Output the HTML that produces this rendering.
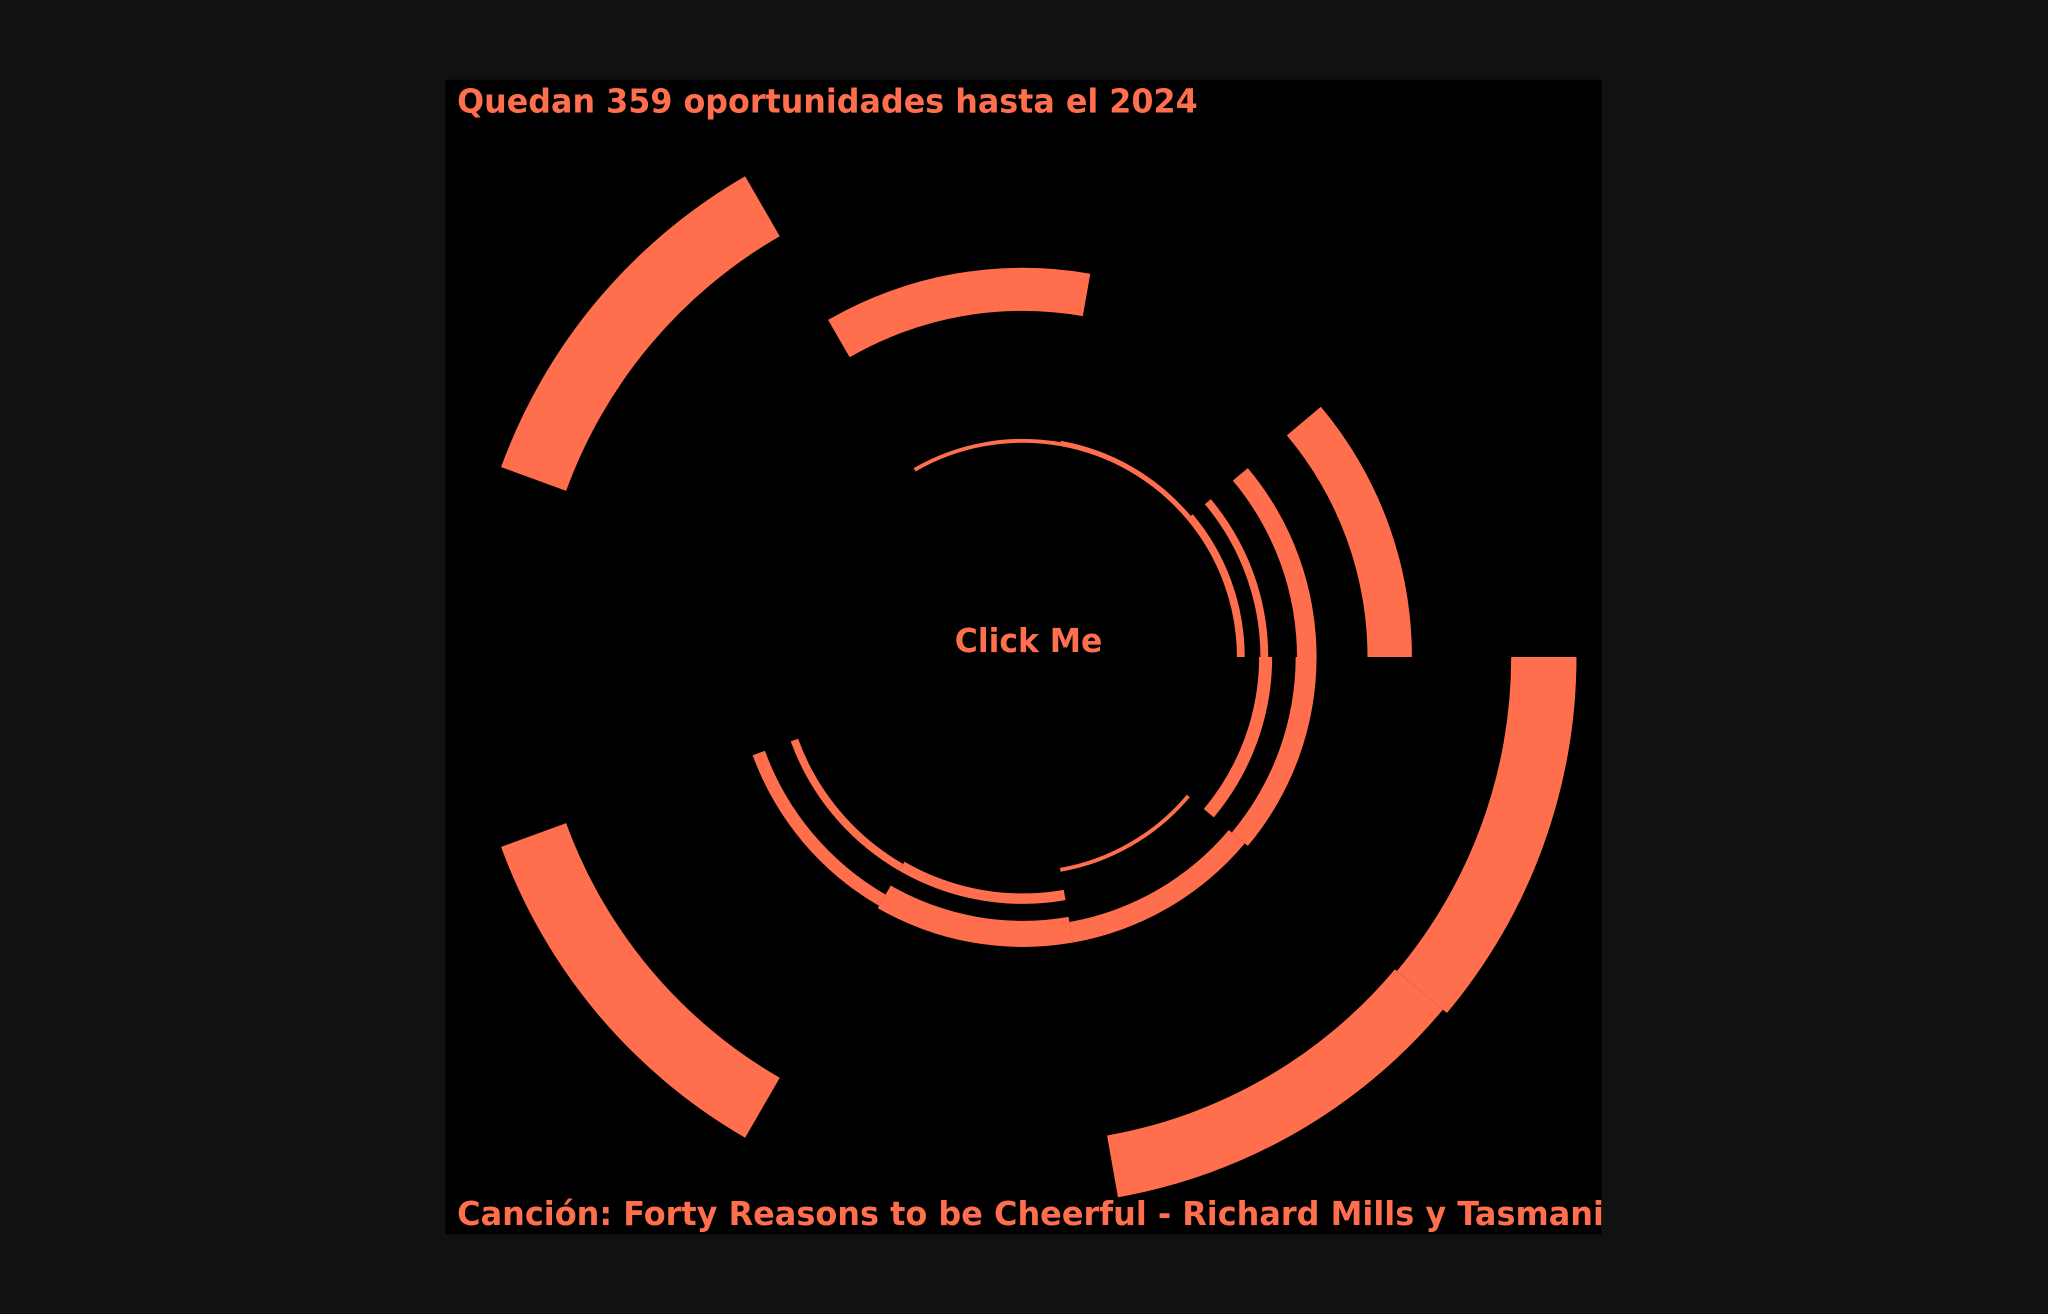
<!DOCTYPE html>
<html><head><meta charset="utf-8"><style>
html,body{margin:0;padding:0;background:#111;width:2048px;height:1314px;overflow:hidden}
svg{display:block}
text{font-family:"DejaVu Sans","Liberation Sans",sans-serif;font-weight:bold;fill:#ff6f4d}
</style></head><body>
<svg id="s" width="2048" height="1314" viewBox="0 0 1568 1006" xmlns="http://www.w3.org/2000/svg">
<defs><clipPath id="c"><rect x="341" y="61" width="885" height="884"/></clipPath></defs>
<rect x="341" y="61" width="885" height="884" fill="#000"/>
<g id="arcs" fill="#ff6f4d"></g>
<g clip-path="url(#c)">
<text x="350" y="86" font-size="25.5" textLength="567" lengthAdjust="spacingAndGlyphs">Quedan 359 oportunidades hasta el 2024</text>
<text x="731" y="499" font-size="25" textLength="113" lengthAdjust="spacingAndGlyphs">Click Me</text>
<text x="350" y="938" font-size="25.5" textLength="878" lengthAdjust="spacingAndGlyphs">Canción: Forty Reasons to be Cheerful - Richard Mills y Tasmani</text>
</g>
</svg>
<script>
var cx=783,cy=503;
var segs=[
[372,425,120,160],[372,425,200,240],[374,424,-40,0],[372,420,-80,-40],
[265,298,80,120],[264,298,0,40],
[164,167,80,120],[164,168,40,80],[164,170,0,40],
[182,188,0,40],[181,191,-40,0],
[210,225,0,40],[209,225,-40,0],[206,222,-80,-40],[202,222,-120,-80],[210,220,-160,-120],
[164,167,-80,-40],[181,189,-120,-80],[183,189,-160,-120]
];
function p(r,a){a=a*Math.PI/180;return (cx+r*Math.cos(a)).toFixed(2)+","+(cy-r*Math.sin(a)).toFixed(2);}
var g=document.getElementById("arcs"),h="";
segs.forEach(function(s){
var ri=s[0],ro=s[1],a1=s[2],a2=s[3],lg=(a2-a1)>180?1:0;
h+='<path d="M'+p(ro,a1)+' A'+ro+','+ro+' 0 '+lg+' 0 '+p(ro,a2)+' L'+p(ri,a2)+' A'+ri+','+ri+' 0 '+lg+' 1 '+p(ri,a1)+' Z"/>';
});
g.innerHTML=h;
</script>
</body></html>
